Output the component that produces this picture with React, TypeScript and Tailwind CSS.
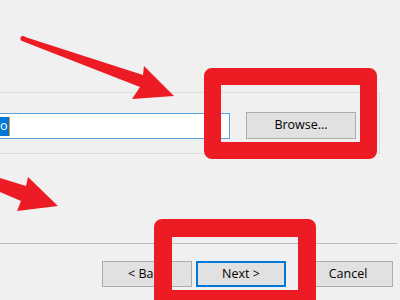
import React from 'react';

const WizardButton: React.FC<{ label: string; primary?: boolean; className?: string }> = ({ label, primary, className }) => (
    <div
        className={
            'flex h-[26px] w-[90px] items-center justify-center bg-[#e1e1e1] text-[12.5px] text-black ' +
            (primary ? 'border-2 border-[#0078d7] ' : 'border border-[#adadad] ') +
            (className ?? '')
        }
    >
        {label}
    </div>
);

const App: React.FC = () => {
    return (
        <div className="relative h-[300px] w-[400px] overflow-hidden bg-[#f0f0f0] font-['Open_Sans',sans-serif]">
            <div className="pt-[92px]">
                {/* path group box */}
                <div className="ml-[-2px] flex h-[62px] w-[382px] items-start border border-[#dcdcdc]">
                    <div className="ml-[-10px] mt-[20px] flex h-[26px] w-[241px] items-center border border-[#5aa0dc] bg-white pl-[10px]">
                        <span className="flex h-[19px] items-center border-r border-[#f0902a] bg-[#0078d7] pr-[1px] text-[12.5px] text-white">o</span>
                    </div>
                    <div className="ml-[16px] mt-[19px] flex h-[27px] w-[110px] items-center justify-center border border-[#adadad] bg-[#e1e1e1] text-[12.5px] text-black">
                        Browse...
                    </div>
                </div>

                <div className="mt-[89px] h-px w-[397px] bg-[#bdbdbd]" />

                <div className="mt-[17px] flex">
                    <WizardButton label="< Back" className="ml-[102px]" />
                    <WizardButton label="Next >" primary className="ml-[4px]" />
                    <WizardButton label="Cancel" className="ml-[17px]" />
                </div>
            </div>

            {/* annotation overlays */}
            <svg className="absolute left-0 top-0" width="400" height="300" viewBox="0 0 400 300">
                <circle cx="23" cy="38.5" r="2.6" fill="#ed1c24" />
                <polygon points="22,36 143,75 144,66 174,96 132,99 140,87 22,41" fill="#ed1c24" />
                <polygon points="0,178 26,186 28,177 58,206 17,211 21,201 0,192" fill="#ed1c24" />
            </svg>
            <div className="absolute left-[204px] top-[68px] h-[91px] w-[173px] rounded-[8px] border-[17px] border-[#ed1c24]" />
            <div className="absolute left-[154px] top-[219px] h-[89px] w-[162px] rounded-[8px] border-[18px] border-[#ed1c24]" />
        </div>
    );
};

export default App;
